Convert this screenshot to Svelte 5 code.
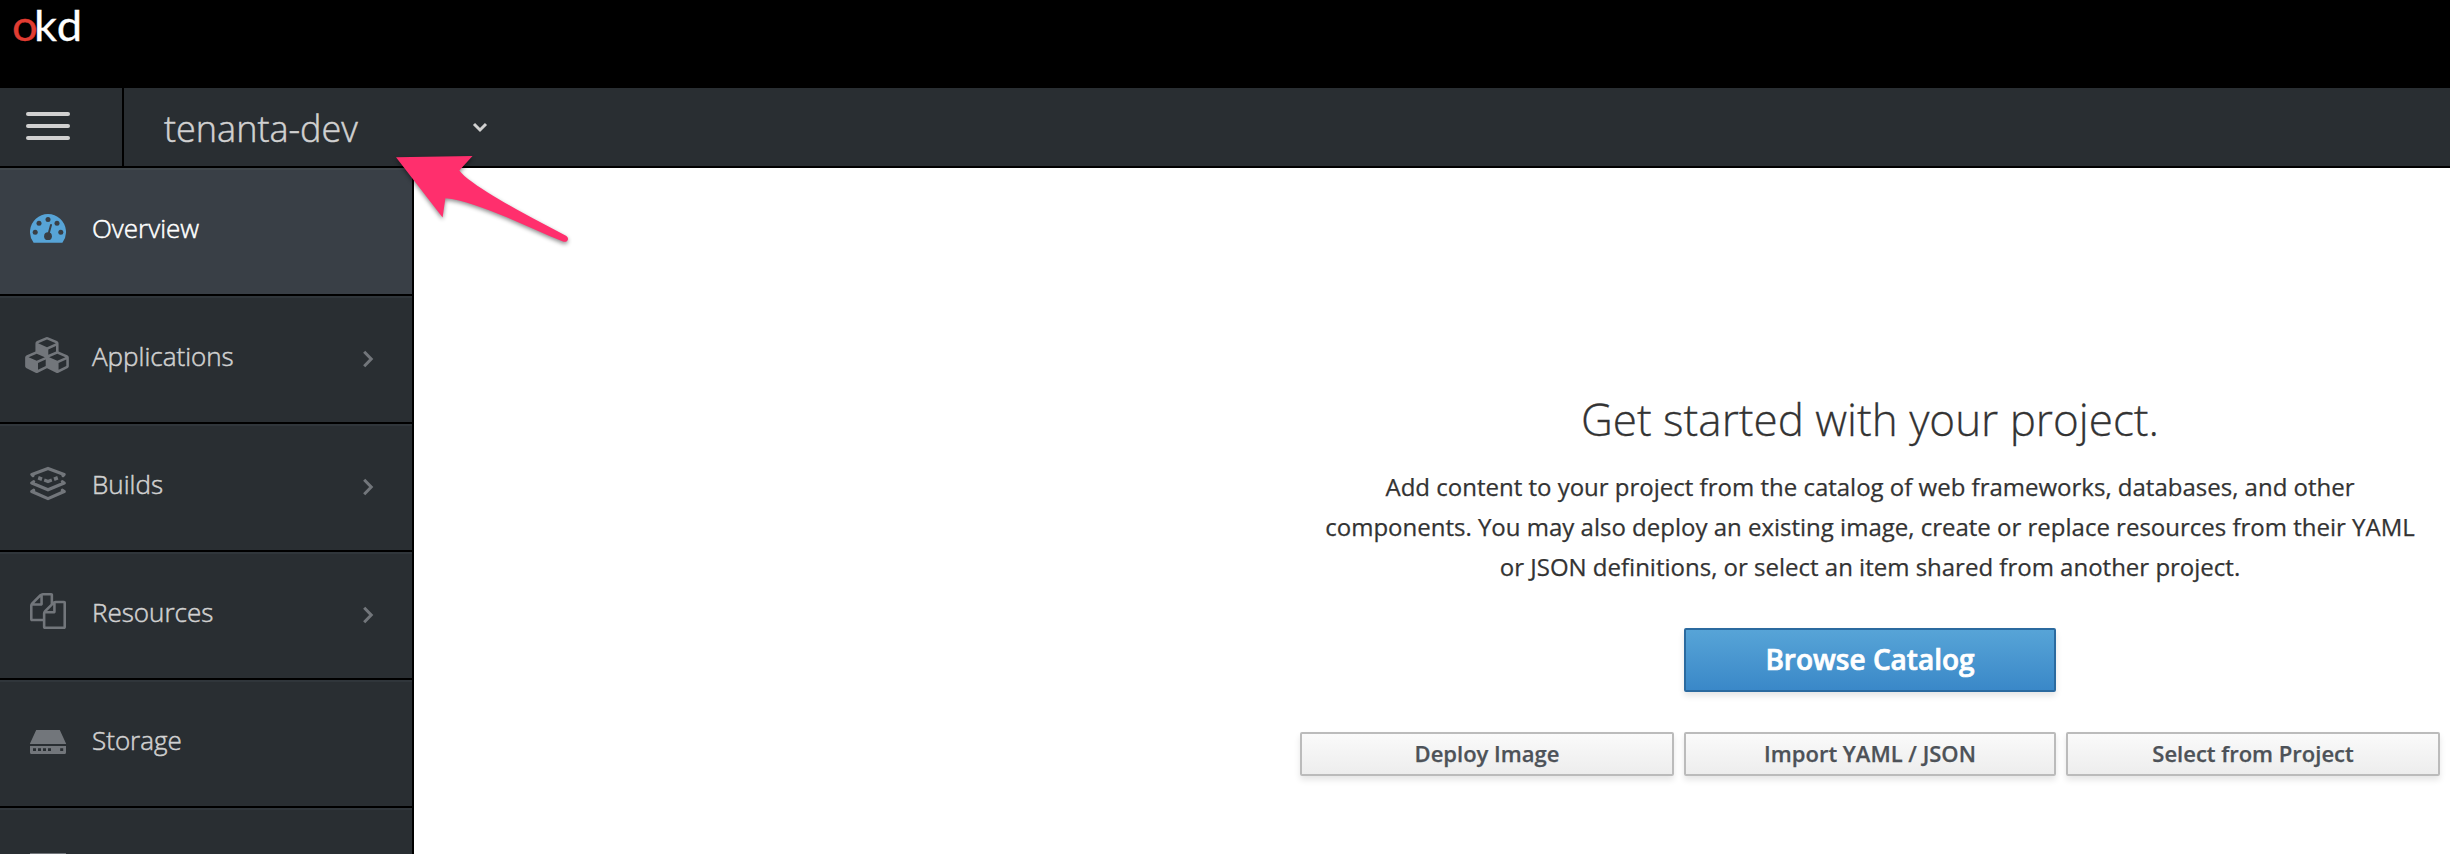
<script>
  const items = [
    { label: 'Overview', icon: 'gauge', active: true },
    { label: 'Applications', icon: 'cubes', more: true },
    { label: 'Builds', icon: 'layers', more: true },
    { label: 'Resources', icon: 'files', more: true },
    { label: 'Storage', icon: 'storage' },
    { label: '', icon: 'monitor' }
  ];
  const actions = ['Deploy Image', 'Import YAML / JSON', 'Select from Project'];
</script>

<div class="page">
  <header class="masthead">
    <svg class="logo" width="90" height="50" role="img" aria-label="okd">
      <text y="41" transform="scale(1.08 1)"><tspan x="11.2" class="red">o</tspan><tspan x="31.600">k</tspan><tspan x="52.600">d</tspan></text>
    </svg>
  </header>

  <div class="navbar">
    <button class="toggle" aria-label="Menu"><i></i><i></i><i></i></button>
    <div class="project">
      <span>tenanta-dev</span>
      <svg class="caret" width="16" height="11" viewBox="0 0 16 11"><path d="M2 2l6 6 6-6" /></svg>
    </div>
  </div>

  <div class="body">
    <nav>
      {#each items as item}
        <a class="item" class:active={item.active}>
          <span class="icon">
            {#if item.icon === 'gauge'}
              <svg class="gauge" width="36" height="29" viewBox="0 0 36 29">
                <path fill="currentColor" d="M3.6 28.8A18 18 0 1 1 32.4 28.8Z" />
                <g fill="#393f46">
                  <circle cx="18" cy="5.5" r="2.5" /><circle cx="9" cy="9.3" r="2.5" /><circle cx="27" cy="9.3" r="2.5" />
                  <circle cx="5.2" cy="18.2" r="2.5" /><circle cx="30.8" cy="18.2" r="2.5" /><circle cx="18" cy="22.2" r="3.9" />
                </g>
                <path d="M18 22L21 11" stroke="#393f46" stroke-width="2" stroke-linecap="round" />
              </svg>
            {:else if item.icon === 'cubes'}
              <svg class="cubes" width="44" height="36" viewBox="0 0 2176 1792"><path fill="currentColor" d="M640 1632l384-192v-314l-384 164v342zm-64-454l404-173-404-173-404 173zm1088 454l384-192v-314l-384 164v342zm-64-454l404-173-404-173-404 173zm-448-293l384-165v-266l-384 164v267zm-64-379l441-189-441-189-441 189zm1088 518v416q0 36-19 67t-52 47l-448 224q-25 14-57 14t-57-14l-448-224q-4-2-7-4-2 2-7 4l-448 224q-25 14-57 14t-57-14l-448-224q-33-16-52-47t-19-67v-416q0-38 21.500-70t56.500-48l434-186v-400q0-38 21.500-70t56.500-48l448-192q23-10 50-10t50 10l448 192q35 16 56.500 48t21.500 70v400l434 186q36 16 57 48t21 70z" /></svg>
            {:else if item.icon === 'layers'}
              <svg class="layers" width="36" height="36" viewBox="0 0 36 36" fill="none" stroke="currentColor" stroke-width="3.2" stroke-linejoin="round" stroke-linecap="round">
                <path d="M3 9.600L1.900 8.400L18 2.400L34.100 8.400L33 9.600" />
                <path d="M3.600 15.700L1.800 17L18 23.800L34.200 17L32.400 15.700" />
                <path d="M3.600 24.200L1.800 25.500L18 32.600L34.200 25.500L32.400 24.200" />
                <g stroke="none" fill="currentColor"><path d="M8.800 10l3.800 1.500-1.200 3.500-3.800-1.500zM27.200 10l-3.800 1.500 1.200 3.500 3.800-1.500zM14.700 12.600L18 13.800l3.300-1.200 1 3L18 17.300l-4.300-1.700z" /></g>
              </svg>
            {:else if item.icon === 'files'}
              <svg class="files" width="36" height="36" viewBox="0 0 1792 1792"><path fill="currentColor" d="M1696 384q40 0 68 28t28 68v1216q0 40-28 68t-68 28h-960q-40 0-68-28t-28-68v-288h-544q-40 0-68-28t-28-68v-672q0-40 20-88t48-76l408-408q28-28 76-48t88-20h416q40 0 68 28t28 68v328q68-40 128-40h416zm-544 213l-299 299h299v-299zm-640-384l-299 299h299v-299zm196 647l316-316v-416h-384v416q0 40-28 68t-68 28h-416v640h512v-256q0-40 20-88t48-76zm956 804v-1152h-384v416q0 40-28 68t-68 28h-416v640h896z" /></svg>
            {:else if item.icon === 'storage'}
              <svg class="storage" width="36" height="24" viewBox="0 0 36 24">
                <path fill="currentColor" d="M6.200 0H29.800L36 13.500V14H0V13.500ZM0 16H36V22.500Q36 24 34.500 24H1.500Q0 24 0 22.500Z" />
                <path fill="#292e32" d="M3 18.200h3v2.800h-3zM8 18.200h3v2.800h-3zM13 18.200h3v2.800h-3zM18 18.200h3v2.800h-3zM30.200 18.200h3v2.800h-3z" />
              </svg>
            {:else}
              <svg class="monitor" width="36" height="30" viewBox="0 0 36 30"><path fill="none" stroke="currentColor" stroke-width="3" d="M1.500 1.500h33v20h-33zM10 28h16" /></svg>
            {/if}
          </span>
          <span class="label">{item.label}</span>
          {#if item.more}
            <svg class="chev" width="12" height="18" viewBox="0 0 12 18"><path d="M2.200 1.800L9.200 9L2.200 16.200" /></svg>
          {/if}
        </a>
      {/each}
    </nav>

    <main>
      <section>
        <h1>Get started with your project.</h1>
        <p>
          Add content to your project from the catalog of web frameworks, databases, and other<br />
          components. You may also deploy an existing image, create or replace resources from their YAML<br />
          or JSON definitions, or select an item shared from another project.
        </p>
        <div class="grid">
          <button class="primary">Browse Catalog</button>
          {#each actions as action}
            <button class="default">{action}</button>
          {/each}
        </div>
      </section>
    </main>
  </div>

  <svg class="arrow" width="190" height="100" viewBox="390 150 190 100">
    <path d="M396 157.300L472.500 156L459.300 170.500C464 177 478 186.500 493 195.700C515 209 540 222 566 235.800C570 238.500 567.500 243 563 241.600C543 233.500 525 225 506.700 217.300C485 208.500 462 199.500 445.400 198.300L442.600 217.500Z" />
  </svg>
</div>

<style>
  :global(body) { margin: 0; background: #fff; }
  .page {
    position: relative;
    display: flex;
    flex-direction: column;
    width: 2450px;
    height: 854px;
    overflow: hidden;
    background: #fff;
    font-family: 'Open Sans', sans-serif;
  }
  .masthead { flex: none; height: 88px; background: #000; }
  .logo { display: block; }
  .logo text { font: 400 42px Lato, sans-serif; fill: #fff; stroke: #fff; stroke-width: 0.3px; }
  .logo .red { fill: #e13c32; stroke: #e13c32; }

  .navbar {
    flex: none;
    display: flex;
    height: 78px;
    background: #292e32;
    border-bottom: 2px solid #000;
  }
  .toggle {
    box-sizing: border-box;
    display: flex;
    flex-direction: column;
    gap: 8px;
    width: 124px;
    padding: 24px 0 0 26px;
    border: 0;
    border-right: 2px solid #000;
    background: none;
  }
  .toggle i { width: 44px; height: 4px; border-radius: 2px; background: #d1d1d1; }
  .project {
    display: flex;
    align-items: center;
    justify-content: space-between;
    width: 324px;
    padding: 0 40px;
    color: #d1d1d1;
    font-size: 36px;
    font-weight: 300;
    line-height: 78px;
    -webkit-text-stroke: 0.5px currentColor;
  }
  .project span { padding-top: 4px; }
  .caret { width: 16px; height: 11px; }
  .caret path { fill: none; stroke: #d1d1d1; stroke-width: 3; }

  .body { flex: 1; display: flex; min-height: 0; }
  nav {
    flex: none;
    width: 412px;
    background: #292e32;
    border-right: 2px solid #000;
    overflow: hidden;
  }
  .item {
    box-sizing: border-box;
    display: flex;
    align-items: flex-start;
    height: 128px;
    padding: 38px 38px 0 24px;
    border-top: 2px solid #30363b;
    border-bottom: 2px solid #000;
    color: #d1d1d1;
    font-size: 26px;
    font-weight: 300;
    line-height: 40px;
    -webkit-text-stroke: 0.5px currentColor;
  }
  .item.active { background: #393f46; border-top-color: #40474c; color: #fff; }
  .icon { display: flex; justify-content: center; width: 48px; color: #72767b; }
  .icon svg { flex: none; display: block; }
  .active .icon { color: #57a4d7; }
  .icon .gauge { margin-top: 6px; }
  .icon .cubes { margin: 1px 2px 0 0; }
  .icon .layers { margin-top: 2px; }
  .icon .files { margin-top: 1px; }
  .icon .storage { margin-top: 10px; }
  .icon .monitor { margin-top: 5px; }
  .label { flex: 1; padding-left: 20px; }
  .chev { margin-top: 14px; }
  .chev path { fill: none; stroke: #72767b; stroke-width: 3; }

  main { flex: 1; display: flex; justify-content: flex-end; padding: 221px 10px 0 0; }
  section { width: 1140px; color: #333; text-align: center; }
  h1 { margin: 0; font-size: 44px; font-weight: 300; line-height: 60px; -webkit-text-stroke: 0.3px currentColor; }
  p { margin: 18px 0 41px; font-size: 24px; line-height: 40px; white-space: nowrap; -webkit-text-stroke: 0.25px currentColor; }
  .grid { display: grid; grid-template-columns: 374px 372px 374px; column-gap: 10px; row-gap: 40px; }
  .grid button {
    box-sizing: border-box;
    height: 44px;
    padding: 0 0 2px;
    border: 2px solid #bbb;
    border-radius: 2px;
    background: linear-gradient(#fafafa, #ededed);
    box-shadow: 0 4px 6px rgba(3, 3, 3, 0.1);
    color: #4d5258;
    font: 600 22px/38px 'Open Sans', sans-serif;
    -webkit-text-stroke: 0.25px currentColor;
  }
  .grid .primary {
    grid-column: 2;
    height: 64px;
    border-color: #2b6a9f;
    background: linear-gradient(#57a4d7, #3a88c8);
    color: #fff;
    font-size: 28px;
    line-height: 58px;
    -webkit-text-stroke-width: 0.7px;
  }
  .grid .primary + .default { grid-column: 1; }

  .arrow { position: absolute; left: 390px; top: 150px; filter: drop-shadow(0 2px 2px rgba(0, 0, 0, 0.45)); }
  .arrow path { fill: #ff2f6d; }
</style>
